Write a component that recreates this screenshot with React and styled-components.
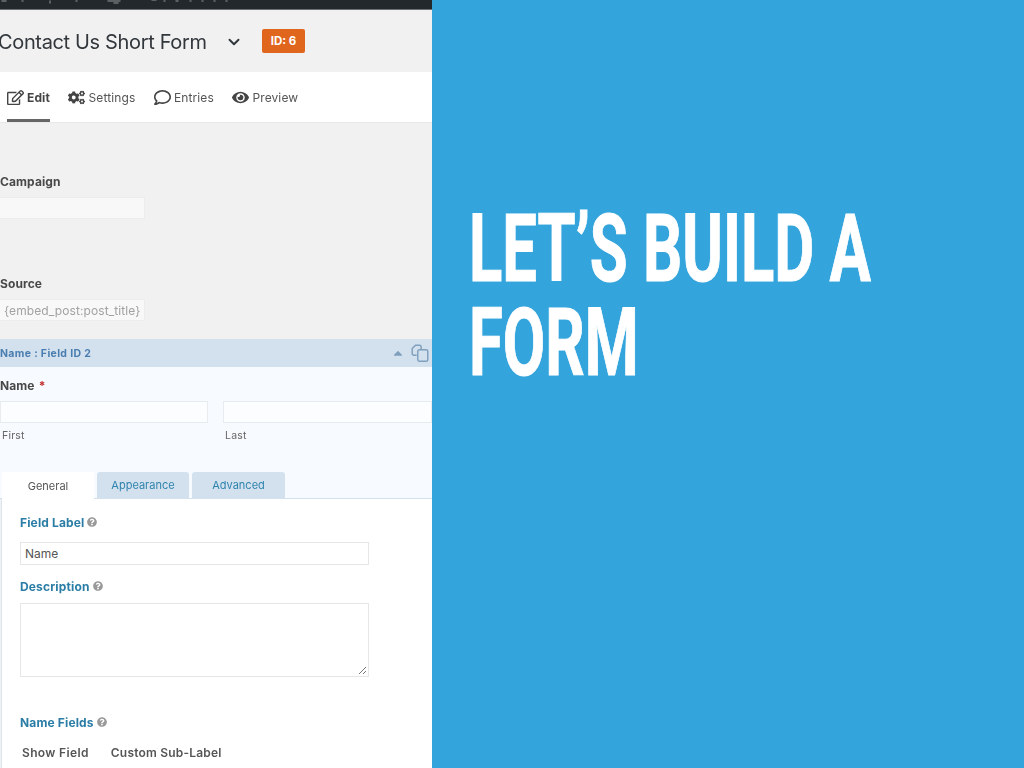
import React from "react";
import styled, { createGlobalStyle } from "styled-components";
import { FaRegEdit, FaCogs, FaRegComment, FaEye, FaQuestionCircle, FaCaretUp } from "react-icons/fa";
import { LuChevronDown } from "react-icons/lu";

const Global = createGlobalStyle`
  html, body { margin: 0; padding: 0; height: 768px; overflow: hidden; }
  body { font-family: Inter, "Liberation Sans", sans-serif; }
  * { box-sizing: border-box; }
`;

const Slide = styled.div`
  display: grid;
  grid-template-columns: 432px 1fr;
  width: 1024px;
  height: 768px;
  overflow: hidden;
  background: #34a4dd;
`;

const Shot = styled.div`
  height: 768px;
  overflow: hidden;
  background: #f1f1f1;
`;

const ShotInner = styled.div`
  filter: blur(0.6px);
`;

const AdminBar = styled.div`
  height: 10px;
  overflow: hidden;
  background: #23282d;
  border-bottom: 1px solid #6d7175;
`;

const AdminMarks = styled.svg`
  display: block;
  width: 260px;
  height: 4px;
`;

const TitleRow = styled.div`
  display: flex;
  align-items: center;
  height: 62px;
  padding-top: 2px;
  margin-left: -2px;
`;

const Title = styled.h1`
  margin: 0;
  width: 230px;
  font-size: 20px;
  font-weight: 400;
  letter-spacing: -0.35px;
  color: #32373c;
`;

const Chevron = styled(LuChevronDown)`
  width: 18px;
  height: 18px;
  margin-left: -3px;
  stroke-width: 2.6;
  color: #32373c;
`;

const Badge = styled.span`
  display: flex;
  align-items: center;
  justify-content: center;
  width: 43px;
  height: 24px;
  margin-left: 19px;
  margin-top: -2px;
  background: #e0661d;
  border-radius: 2px;
  color: #fff;
  font-size: 11.500px;
  font-weight: 700;
`;

const TabBar = styled.div`
  display: flex;
  gap: 18.500px;
  height: 51px;
  padding-left: 7px;
  background: #fff;
  border-bottom: 1px solid #e8e8e8;
`;

const NavTab = styled.div`
  display: flex;
  align-items: center;
  gap: 3px;
  height: 50px;
  padding-top: 4px;
  border-bottom: 3px solid ${p => (p.$active ? "#666" : "transparent")};
  color: ${p => (p.$active ? "#444" : "#555")};
  font-size: 12px;
  letter-spacing: 0.12px;
  font-weight: ${p => (p.$active ? 700 : 400)};

  svg {
    width: 17px;
    height: 17px;
    color: #444;
  }
`;

const Plain = styled.div`
  padding-top: 51px;
  height: 216px;
`;

const GreyLabel = styled.div`
  height: 16px;
  margin-top: ${p => p.$top || 0}px;
  line-height: 16px;
  font-size: 12px;
  font-weight: 700;
  letter-spacing: 0.1px;
  color: #484848;
`;

const FadedInput = styled.div`
  display: flex;
  align-items: center;
  width: 145px;
  height: 22px;
  margin-top: ${p => p.$top || 7}px;
  padding-left: 4px;
  background: #f8f8f8;
  border: 1px solid #ececec;
  border-left: 0;
  font-size: 12px;
  letter-spacing: 0.1px;
  color: #a2a2a2;
  white-space: nowrap;
`;

const FieldHead = styled.div`
  display: flex;
  align-items: center;
  justify-content: space-between;
  height: 28px;
  padding-right: 2px;
  background: #d3e0ee;
  color: #4a7eb0;
  font-size: 10.500px;
  font-weight: 700;
  letter-spacing: 0.35px;
`;

const HeadIcons = styled.div`
  display: flex;
  align-items: center;
  gap: 5px;
  color: #7f9fbd;
`;

const FieldBody = styled.div`
  height: 105px;
  padding-top: 11px;
  background: #f7fbff;
`;

const Required = styled.span`
  margin-left: 4px;
  color: #c02b2b;
`;

const NameRow = styled.div`
  display: grid;
  grid-template-columns: 208px 1fr;
  column-gap: 15px;
  margin-top: 7px;
`;

const NameCol = styled.div`
  display: flex;
  flex-direction: column;
`;

const NameInput = styled.div`
  height: 22px;
  background: #fcfdfe;
  border: 1px solid #e8ecef;
`;

const SubLabel = styled.span`
  margin-top: 6px;
  padding-left: 2px;
  line-height: 14px;
  font-size: 10.500px;
  letter-spacing: 0.2px;
  color: #666;
`;

const SettingTabs = styled.div`
  display: flex;
  gap: 3px;
  height: 27px;
  padding-left: 2px;
  background: #f7fbff;
  border-bottom: 1px solid #d3e0ee;
`;

const SettingTab = styled.div`
  display: flex;
  align-items: center;
  justify-content: center;
  width: ${p => p.$width}px;
  height: ${p => (p.$active ? 27 : 26)}px;
  background: ${p => (p.$active ? "#fff" : "#d3e0ee")};
  border-radius: 3px 3px 0 0;
  color: ${p => (p.$active ? "#555" : "#2f84ad")};
  font-size: 11px;
`;

const Panel = styled.div`
  height: 270px;
  margin-left: 1px;
  padding: 15px 0 0 18px;
  background: #fff;
  border-left: 1px solid #d9e6f2;
`;

const BlueLabel = styled.div`
  display: flex;
  align-items: center;
  gap: 3px;
  height: 16px;
  margin-top: ${p => p.$top || 0}px;
  font-size: 12px;
  font-weight: 700;
  letter-spacing: 0.15px;
  color: #2b7da6;

  svg {
    width: 10px;
    height: 10px;
    color: #999;
  }
`;

const TextBox = styled.div`
  display: flex;
  align-items: center;
  position: relative;
  width: 349px;
  height: ${p => p.$height}px;
  margin-top: ${p => p.$top}px;
  padding-left: 4px;
  background: #fff;
  border: 1px solid #e6e6e6;
  font-size: 12px;
  color: #555;
`;

const Grip = styled.svg`
  position: absolute;
  right: 1px;
  bottom: 1px;
  width: 9px;
  height: 9px;
`;

const ColumnHeads = styled.div`
  display: flex;
  gap: 22px;
  margin-top: 15px;
  padding-left: 2px;
  line-height: 16px;
  font-size: 12px;
  font-weight: 600;
  letter-spacing: 0.2px;
  color: #555;
`;

const ShowField = styled.span`
  letter-spacing: 0.35px;
`;

const HeroSide = styled.div`
  padding: 202px 0 0 37px;
`;

const Heading = styled.h2`
  margin: 0;
  width: 700px;
  transform: scaleX(0.655);
  transform-origin: left top;
  font-family: Roboto, "Liberation Sans", sans-serif;
  font-size: 94px;
  font-weight: 700;
  line-height: 94px;
  white-space: nowrap;
  -webkit-text-stroke: 1px #fff;
  color: #fff;
`;

const CloneIcon = () => (
  <svg width="20" height="20" viewBox="0 0 18 18" fill="none" stroke="currentColor" strokeWidth="1.3">
    <path d="M6 11H3.500A1.500 1.500 0 0 1 2 9.500V5l3-3h3.500A1.500 1.500 0 0 1 10 3.500V6" />
    <rect x="7" y="6" width="9" height="10.500" rx="1.500" />
  </svg>
);

export default function App() {
  return (
    <Slide>
      <Global />
      <Shot>
        <ShotInner>
          <AdminBar>
            <AdminMarks viewBox="0 0 260 4" stroke="#6f7376" strokeWidth="1.500" strokeLinecap="round">
              <path d="M2 1L6 1M22 1h1M50 1v2M76 1h1M108 1h12M114 3h4M152 0h4M164 1h1M176 1h2M190 1h1M202 1h1M214 1h1M226 1h1" />
            </AdminMarks>
          </AdminBar>
          <TitleRow>
            <Title>Contact Us Short Form</Title>
            <Chevron />
            <Badge>ID: 6</Badge>
          </TitleRow>
          <TabBar>
            <NavTab $active><FaRegEdit />Edit</NavTab>
            <NavTab><FaCogs />Settings</NavTab>
            <NavTab><FaRegComment />Entries</NavTab>
            <NavTab><FaEye />Preview</NavTab>
          </TabBar>
          <Plain>
            <GreyLabel>Campaign</GreyLabel>
            <FadedInput />
            <GreyLabel $top={57}>Source</GreyLabel>
            <FadedInput $top={7}>{"{embed_post:post_title}"}</FadedInput>
          </Plain>
          <FieldHead>
            Name : Field ID 2
            <HeadIcons><FaCaretUp size={14} /><CloneIcon /></HeadIcons>
          </FieldHead>
          <FieldBody>
            <GreyLabel>Name<Required>*</Required></GreyLabel>
            <NameRow>
              <NameCol><NameInput /><SubLabel>First</SubLabel></NameCol>
              <NameCol><NameInput /><SubLabel>Last</SubLabel></NameCol>
            </NameRow>
          </FieldBody>
          <SettingTabs>
            <SettingTab $active $width={92}>General</SettingTab>
            <SettingTab $width={92}>Appearance</SettingTab>
            <SettingTab $width={93}>Advanced</SettingTab>
          </SettingTabs>
          <Panel>
            <BlueLabel>Field Label <FaQuestionCircle /></BlueLabel>
            <TextBox $height={23} $top={12}>Name</TextBox>
            <BlueLabel $top={13}>Description <FaQuestionCircle /></BlueLabel>
            <TextBox $height={74} $top={9}>
              <Grip viewBox="0 0 9 9" stroke="#777" strokeWidth="1">
                <path d="M1 8L8 1M5 8L8 5" />
              </Grip>
            </TextBox>
            <BlueLabel $top={37}>Name Fields <FaQuestionCircle /></BlueLabel>
            <ColumnHeads><ShowField>Show Field</ShowField><span>Custom Sub-Label</span></ColumnHeads>
          </Panel>
        </ShotInner>
      </Shot>
      <HeroSide>
        <Heading>LET’S BUILD A<br />FORM</Heading>
      </HeroSide>
    </Slide>
  );
}
